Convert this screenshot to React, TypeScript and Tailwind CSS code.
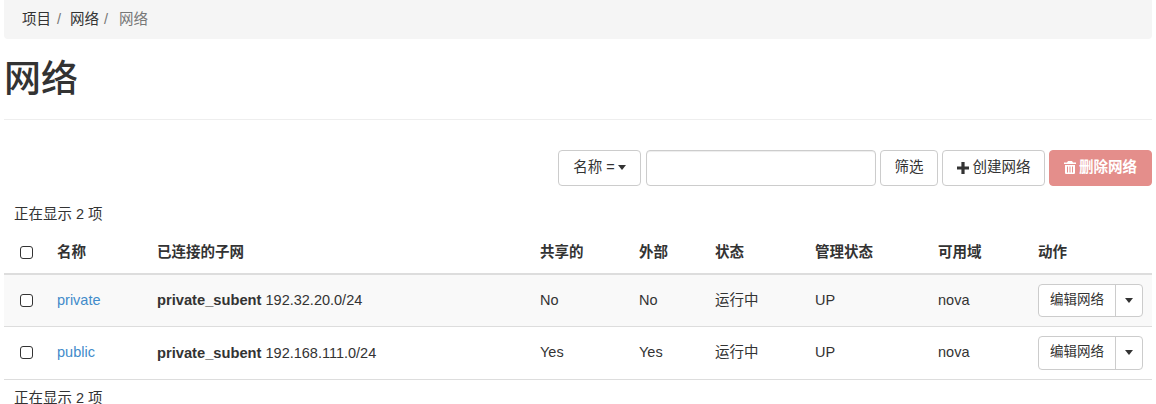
const font = "font-['Liberation_Sans','Noto_Sans_CJK_SC',sans-serif]";

const rows = [
  { name: 'private', subnet: '192.32.20.0/24', shared: 'No', external: 'No', height: 'h-[52px] bg-[#f9f9f9]', action: 'h-[33px]' },
  { name: 'public', subnet: '192.168.111.0/24', shared: 'Yes', external: 'Yes', height: 'h-[53px]', action: 'h-[34px]' },
];

const headers = ['名称', '已连接的子网', '共享的', '外部', '状态', '管理状态', '可用域', '动作'];

function Caret() {
  return <span className="inline-block border-x-[4.5px] border-t-[5px] border-x-transparent border-t-[#333]" />;
}

function Checkbox() {
  return <span className="block h-[13px] w-[13px] rounded-[3px] border border-[#333] bg-white" />;
}

function PlusIcon() {
  return (
    <svg viewBox="0 0 12 12" className="h-3 w-3 fill-[#333]">
      <path d="M4.4 0h3.2v4.4H12v3.2H7.6V12H4.4V7.6H0V4.4h4.4z" />
    </svg>
  );
}

function TrashIcon() {
  return (
    <svg viewBox="0 0 12 13" className="h-[13px] w-3 fill-white">
      <path d="M4 0h4l1 1.5h3v1.6H0V1.5h3zM1 4h10v8a1 1 0 0 1-1 1H2a1 1 0 0 1-1-1zm2 1.5v6h1v-6zm2.5 0v6h1v-6zm2.5 0v6h1v-6z" />
    </svg>
  );
}

function Toolbar() {
  return (
    <div className="flex h-9 justify-end">
      <button className="flex w-[83px] items-center justify-center gap-[3px] rounded border border-[#ccc] bg-white pb-px text-[#333]">
        名称 = <Caret />
      </button>
      <input className="ml-[5px] w-[230px] rounded border border-[#ccc] bg-white shadow-[inset_0_1px_1px_rgba(0,0,0,0.075)]" />
      <button className="ml-1 w-[58px] rounded border border-[#ccc] bg-white pb-px text-[#333]">筛选</button>
      <button className="ml-1 flex w-[103px] items-center justify-center gap-1 rounded border border-[#ccc] bg-white pb-px text-[#333]">
        <PlusIcon /> 创建网络
      </button>
      <button className="ml-1 flex w-[103px] items-center justify-center gap-[3px] rounded border border-[#e48e8b] bg-[#e48e8b] pb-px font-bold text-white">
        <TrashIcon /> 删除网络
      </button>
    </div>
  );
}

function RowActions({ height }: { height: string }) {
  return (
    <div className={`flex w-[105px] rounded border border-[#ccc] bg-white text-[13.5px] text-[#333] ${height}`}>
      <span className="flex w-[77px] items-center justify-center border-r border-[#ccc]">编辑网络</span>
      <span className="flex flex-1 items-center justify-center"><Caret /></span>
    </div>
  );
}

export default function App() {
  return (
    <div className={`${font} h-[404px] overflow-hidden bg-white px-1 text-[14.5px] text-[#333]`}>
      <div className="flex h-[39px] items-center rounded-b bg-[#f5f5f5] pl-[18px]">
        <span>项目</span>
        <span className="ml-[6px] text-[#777]">/</span>
        <span className="ml-[9px]">网络</span>
        <span className="ml-[5px] text-[#777]">/</span>
        <span className="ml-[11px] text-[#777]">网络</span>
      </div>
      <h1 className="mt-[19px] text-[37px] leading-[44px] font-medium">网络</h1>
      <div className="mt-[17px] border-t border-[#eee]" />
      <div className="mt-[30px]"><Toolbar /></div>
      <div className="mt-[18px] pl-2.5 leading-5">正在显示 2 项</div>
      <table className="mt-2 w-[1148px] table-fixed border-collapse">
        <thead>
          <tr className="h-[42px] border-b-2 border-[#ddd] text-left">
            <th className="w-[45px] pl-4"><Checkbox /></th>
            {headers.map((h, i) => (
              <th
                key={h}
                className={`px-2 pt-px font-bold ${['w-[100px]', 'w-[383px]', 'w-[99px]', 'w-[76px]', 'w-[100px]', 'w-[123px]', 'w-[100px]', 'w-[122px]'][i]}`}
              >
                {h}
              </th>
            ))}
          </tr>
        </thead>
        <tbody>
          {rows.map((r) => (
            <tr key={r.name} className={`${r.height} border-b border-[#ddd]`}>
              <td className="pl-4"><Checkbox /></td>
              <td className="px-2 pt-px text-[#428bca]">{r.name}</td>
              <td className="px-2 pt-px"><b className="text-[14.7px]">private_subent</b> {r.subnet}</td>
              <td className="px-2 pt-px">{r.shared}</td>
              <td className="px-2 pt-px">{r.external}</td>
              <td className="px-2 pt-px">运行中</td>
              <td className="px-2 pt-px">UP</td>
              <td className="px-2 pt-px">nova</td>
              <td className="px-2"><RowActions height={r.action} /></td>
            </tr>
          ))}
        </tbody>
      </table>
      <div className="mt-2 pl-2.5 leading-5">正在显示 2 项</div>
    </div>
  );
}
